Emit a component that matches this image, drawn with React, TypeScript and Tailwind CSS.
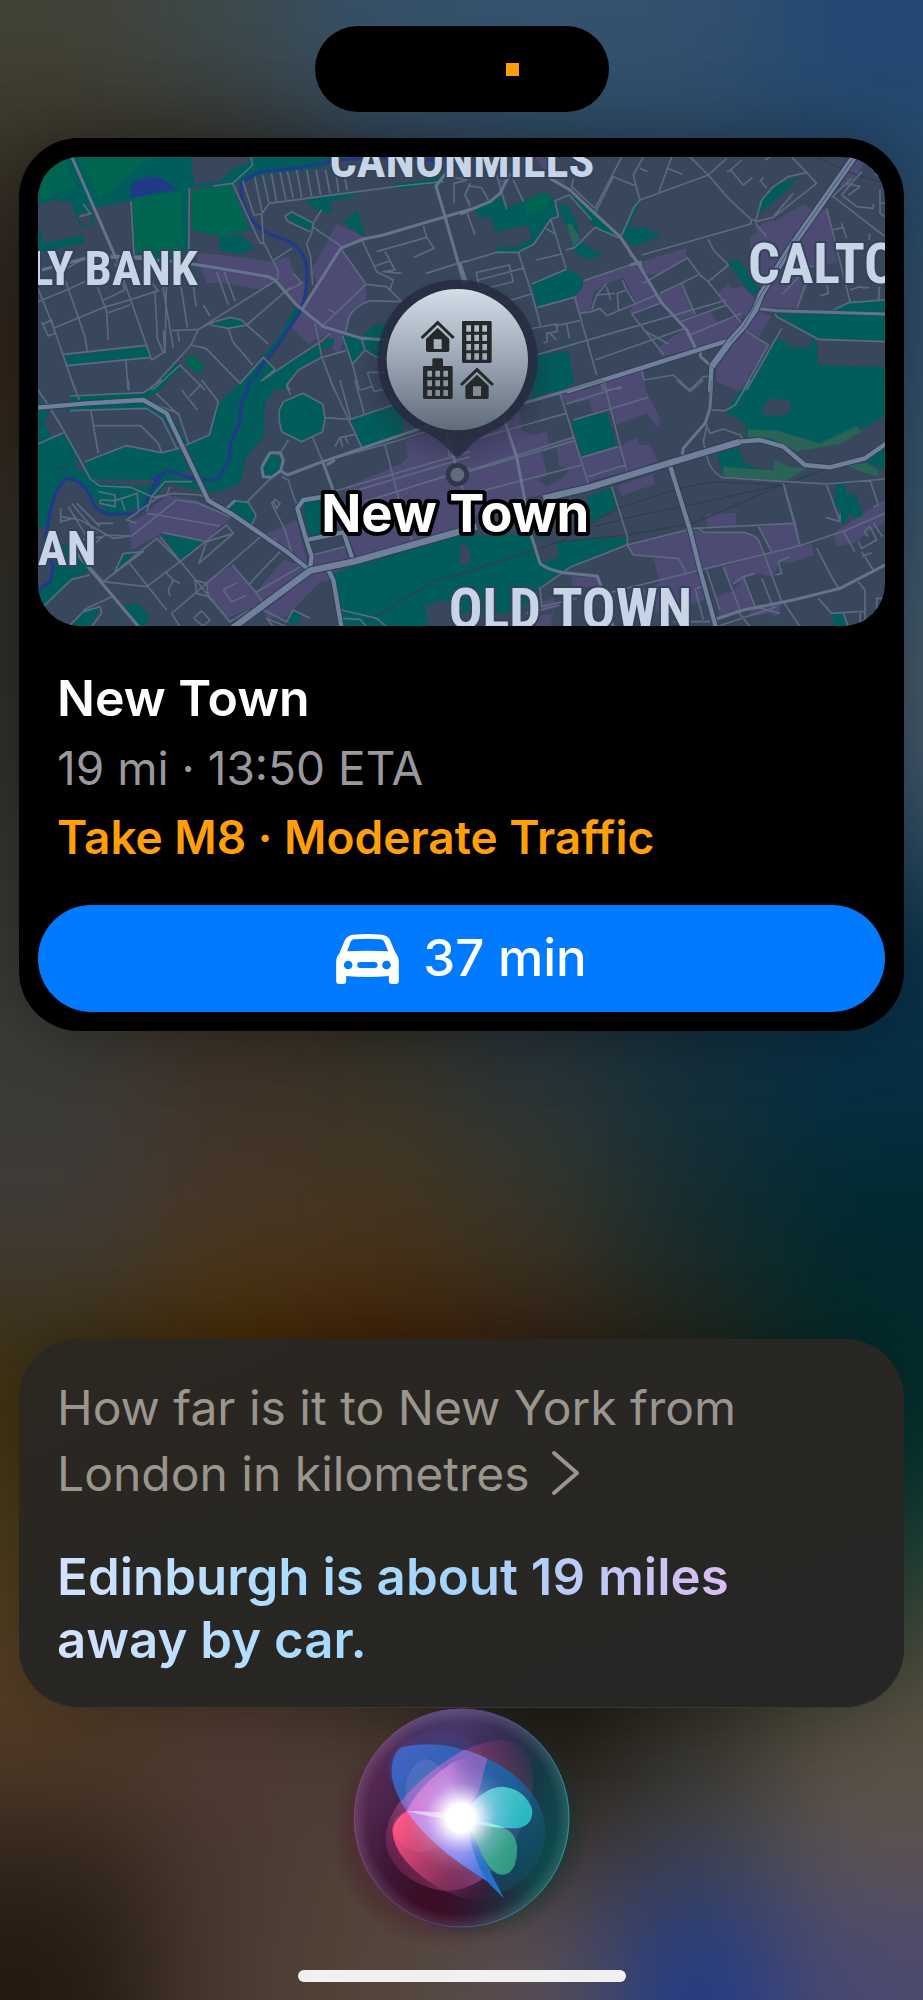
import React from 'react'

// The map is drawn from four tiles, each with its own local coordinates
interface MapTile {
  x: number
  y: number
  green: string
  bright: string
  olive: string
  purple: string
  slate: string
  water: string
  lake: string
  rail: string
  minor: string
  medium: string
  major: string
  trunk: string
}

const tiles: MapTile[] = [
  {
    x: -114,
    y: -111,
    green:
      'M110 105H575L575 150L588 193L570 205L565 385L520 430L405 400L393 243L290 262L265 250L288 312L242 322L210 240L180 250L172 237L114 255Z M114 318L125 345L128 370L245 345L255 368L170 388L114 400Z M588 192L655 185L680 165L700 145L745 130L750 105H1060L950 148L800 163L735 185L700 192L610 204Z M660 352L725 345L762 385L720 402L658 390Z M918 238L1062 218L1060 232L990 245L998 275L985 280L945 268Z M1028 308L1072 268L1098 352Z M875 275L938 304L932 332L865 300Z M1175 195L1290 178L1330 155L1320 190L1200 207Z M635 615L690 592L735 605L742 615L690 622Z M193 708L440 680L450 710L205 735Z M530 730L450 810H480L545 738Z M885 560L900 575L830 690L790 712L830 748L985 660L1000 655L1003 675L965 688L965 712L895 750L860 800V810H700L760 740L830 660Z M1028 648L1080 655L1092 690L1058 732Z M1092 640L1125 612L1165 615L1160 710L1130 712L1095 690Z',
    bright:
      'M400 232L545 215L550 385L405 400Z M575 212L695 195L750 335L720 335L670 352L575 330Z M553 728L575 703L615 738L595 762Z M114 180L148 150L165 225L114 242Z M140 146L195 118L228 200L172 220Z M230 111H450L300 238Z',
    olive: '',
    purple:
      'M580 395L820 425L865 408L890 480L925 485L905 560L855 510L822 480L790 510L680 490L620 490L600 440Z M1010 312L1070 340L1105 360L1022 385L1098 495L1098 550L1050 580L1020 700L1000 690L985 640L925 672L875 625L905 575L950 490L935 450Z',
    slate: 'M232 282L262 275L278 308L245 318Z',
    water:
      'M1330 127L1270 117L1190 113L1040 118L880 145L780 155L735 180Q720 190 722 210Q725 270 770 315Q800 345 860 360Q910 385 920 440Q925 520 900 575L830 680L780 745L740 815',
    lake: 'M392 192Q470 140 527 208L392 235Z',
    rail: '',
    minor:
      'M393 243L402 405M568 205L566 400M752 111L758 135L698 190L780 368L795 372M698 190L640 198M728 182L762 285L785 282L808 250L1200 198L1330 185M764 170L786 275M788 165L806 246M814 160L830 245M840 156L858 240M862 154L880 235M890 150L905 232M920 150L935 230M948 148L962 225M976 148L990 220M1005 145L1016 216M1030 155L1042 212M785 280L790 365L835 455L832 480M822 420L875 385M965 268L940 310L875 275L855 288L862 304L932 336M940 310L935 340L920 372L932 410L938 495M940 322L1025 380M1088 365L1130 455L1180 480L1170 508M1130 395L1280 352L1270 318M1280 352L1302 385L1242 412M1155 395L1185 450L1150 455L1205 460M1125 438L1170 422M1278 460L1400 422M1330 165L1400 180L1362 190V250M1022 385L1098 493L1160 500L1205 545M1098 493L970 615M985 567L1005 580M1203 545L1110 542Q1060 560 1048 590L1035 640M880 460L905 490L855 515M830 480L595 628L515 632M870 502L740 615L725 600L690 592L640 606L595 628L573 675L450 810M630 615L685 625L740 615L805 672M685 625L698 665L758 735M720 790L790 712L825 748L785 782L965 662L990 640M573 675L618 685L720 790M458 810L540 735L615 810M114 505L160 620L225 810M114 545L205 508L265 480M160 625L312 562L388 540L475 512L440 470M265 425L320 575L325 660M185 450L255 650L262 695M310 540L375 510M345 405L455 720L490 698L472 655L465 515M325 578L390 555M375 510L345 430M480 450L520 685M500 450L495 700M540 480L562 622M578 480L588 560M650 455L685 555M672 455L706 545M190 703L438 676M202 737L452 712M378 722L384 810M610 555L630 588M125 605L145 648L165 640L155 600L130 612M532 630L538 665M490 632L494 695M945 610L965 710L1003 810M965 712L895 750L860 795L870 810M967 712L1038 692M1028 648L1058 735L1078 810M1058 732L1095 690L1085 658M1095 690L1130 712H1160M1102 757H1160M1102 757L1120 810M1410 190L1395 225L1410 250M190 450L260 412L345 405M238 290L275 280M250 252L270 280',
    medium:
      'M213 105L345 408L520 425M114 453L190 432L260 414L430 410M560 430L640 442L805 470L825 480L890 555L970 620L1085 655L1165 660M905 570L1022 385L1090 357L1150 345L1410 268M1345 150L1308 198L1335 290L1392 490',
    major: '',
    trunk: '',
  },
  {
    x: 1266,
    y: -111,
    green:
      'M45 270L120 230L145 262L255 215L285 240L298 290L272 300L220 372L180 395L105 392L108 382L170 380L215 355L205 315L110 335L90 290L55 295Z M328 218L400 280L470 345L480 355L405 322L350 245Z M293 258L320 252L358 325L352 330L365 370L428 405L385 418L345 398L338 350L318 320Z M483 345L525 260L570 235L540 250L505 325L560 322L570 340L595 335L600 348L520 380Z M895 283L905 240L940 200L1020 168L965 225Z M213 490L320 448Q365 460 370 490Q365 525 325 535L232 563Z M805 430L835 418L898 510L880 528Z M235 705L325 693L342 790L300 815H180Z M1122 568L1165 548L1280 540V578L1130 572Z M945 580L1280 585V665L1075 655Z M950 655L980 665L985 680L1045 685L1058 655L1070 668L1075 735L1280 742V815H855Z',
    bright: 'M190 245L255 215L275 230L255 270L200 290Z',
    olive: 'M320 312L335 312L362 358L340 380Z',
    purple:
      'M225 111H255L320 165L310 190L270 175Z M80 111H140L150 160L125 195L110 165Z M342 540L370 480L510 435L678 385L680 410L590 465L545 460L592 525L665 490L705 585L650 600L605 548L515 582L510 570L530 550L490 475L440 490L400 520L390 570L360 580Z M592 685L670 628L665 600L755 575L768 605L800 600L845 590L820 660L720 680L605 710Z M772 520L805 490L818 508L845 498L885 535L870 580L835 600L790 550Z M880 565L935 590L895 650L860 630Z M770 722L860 630L925 675L840 810L768 785Z M885 320L940 298L948 315L920 350L890 335Z M870 350L1030 252L1075 280L1100 265L1132 430L1040 435L1045 495L1010 565L890 560L905 520L870 400Z M1190 111H1225L1165 205L1140 195Z M360 815L545 750L560 815Z',
    slate: '',
    water: '',
    lake: '',
    rail: 'M1075 111Q1140 155 1275 190',
    minor:
      'M30 260L15 225L28 198L65 203L85 240M20 275L45 345M110 165L140 268M160 180L190 245M0 430L110 397H175L222 372L272 298L295 290L285 242L328 225L395 300M175 397L215 520L242 618M48 458L148 435L160 485L60 510L48 458M55 480L188 445M272 298L318 445M228 420L305 402M258 325L285 342M318 390L345 382L405 322L480 355M340 175L335 200L405 265L485 111M405 280L460 170L528 198L520 165L550 111M528 198L540 240L745 165L690 111M540 240L522 262L483 350M597 215L635 111M622 145L668 163M540 145L562 155M745 165L800 115M745 165L805 235L875 300L872 312L545 405M745 358L760 390L805 435L745 485L800 555L845 610M680 410L720 465L745 485M550 490L680 415M600 520L715 465M665 490L705 582M875 300H888V312L920 350M888 300L905 240L940 200L985 170L1040 158L995 111M940 290L1000 220M1040 158L1070 190L940 292L888 305M900 180L920 205M910 172L900 185M800 155L812 150L850 195L878 172M812 150L845 120M915 120L930 111M1145 225L1205 155M1120 230L1275 350M1115 232L1175 175M1145 225L1190 260L1240 265V252M1165 225L1200 200L1160 190M1260 210V280L1275 290M1260 250H1275M1245 160L1262 170M1100 265L1170 545M1115 330L1150 322M1145 310L1160 355M1228 340V360M1050 435L968 522M1045 440L1100 435M1035 495L1012 565M1100 485L1105 520L1080 528M1170 510L1200 500L1210 503H1228M1258 500L1256 540M215 492L320 448M370 482L510 435M345 535L410 765M232 563L350 530M130 548L213 522M360 580L395 575L420 565L440 587L590 525M395 570L410 525L440 490M410 525L465 520M440 500L452 540M487 480L500 510L472 520L475 570M500 510L525 550M190 630L290 612L292 635L260 640L262 665L250 670M320 610L328 655M360 602L285 618M270 640L290 660M235 703L660 580L800 540M405 720L675 625M515 582L605 548M515 582L612 705M550 630L625 672M660 605L800 555M690 645L845 580M845 625L925 675L850 810M965 625L860 810M945 580L950 590L1075 658L1275 665M1120 570L1165 548L1275 540M420 780L430 810M545 750L552 780L640 765L690 810L730 770L755 768M430 810L485 805',
    medium:
      'M0 282L90 245L120 220L150 160M270 175L330 210L395 272L480 350L540 440L605 548L680 630L712 695M510 400L545 440M510 435L545 425M885 565L950 572L1275 582M720 690L722 710L755 740L800 690M0 430L20 490',
    major: 'M320 815L720 688L810 660M755 735L750 815',
    trunk: 'M1190 100L990 385L905 520L885 570L850 620L810 665L755 740',
  },
  {
    x: -114,
    y: 669,
    green:
      'M114 50L130 75L150 95L130 125L155 170L114 190Z M114 195L190 160L275 298L300 310L430 315L465 310L505 290L600 300L560 195L625 165L655 70L720 10L755 -10H870L830 20L795 70L790 170L740 230L720 310L660 335L615 335L505 310L430 385L330 403L270 345L240 305L200 300L160 350L145 440H114Z M250 245L380 197L485 215L535 205L570 270L500 300L275 298Z M170 490L210 500L270 570L215 600L160 660L125 685L114 640L160 590Z M838 90L850 62L908 40L965 70L975 115L965 155L905 185L845 155L838 125Z M1052 118L1160 85L1210 65V170L1088 202Z M780 260L810 220L850 240L845 270L815 292L785 290Z M680 385L705 362L745 368L768 405L755 435Z M905 370L960 358L1000 440L1030 455L930 470Z M485 462L620 485L540 540Z M370 520L410 510L340 580Z M980 585L1430 445V745H1030L1000 600Z M690 745L740 695L760 690L720 745Z M860 720L885 690L905 712L885 738Z M205 740L250 695L300 680L270 745Z M370 675L418 670L450 715L430 740L410 735Z M215 45L440 35L500 -10L480 30L440 55L500 85L560 190L540 200L490 115L440 88L200 92Z',
    bright: '',
    olive: '',
    purple:
      'M385 430L440 400L500 345L590 360L695 415L660 440L625 480L485 460L395 510Z M620 600L700 555L770 635L790 670L680 715L625 650Z M790 465L890 420L925 560L850 510Z M770 635L850 540L925 560L790 670Z M795 690L935 580L1060 565L1065 588L960 605L860 710L800 715Z M935 530L1035 500L1045 540L940 560Z M1040 320L1205 250L1225 230L1215 180L1330 145H1420V460L1070 530L1045 470Z',
    slate: 'M1358 500L1380 485L1425 500V545L1370 558Z M1275 680L1325 660L1420 690V745H1285Z M215 225L260 275L235 270Z M385 305L430 305L450 320L385 318Z',
    water:
      'M755 -5L725 70L718 130L692 190L688 240L655 295Q610 310 505 273L480 285L460 320L430 385Q415 405 330 403Q280 395 270 345Q240 295 200 295Q165 320 150 400L135 480L160 560L150 605L114 630',
    lake: 'M455 295L490 275L475 320Z',
    rail: 'M1100 725L1300 605L1420 568M160 275L205 255',
    minor:
      'M114 30L145 75L190 150L272 298L300 318L392 322L460 352L520 340L600 345L640 360M215 0L238 60M385 0L387 32M210 48L430 38L485 0M210 92L440 85L485 115L530 205M272 90L295 220M278 137H422L475 190L485 218M255 245L378 197L485 218L530 207L628 165L655 65L605 0M114 192L190 158M430 60L535 100L565 190M468 40L505 75L535 105M545 30L592 90M605 12L568 50M870 0L860 20L872 45M838 90L850 65L908 40L968 72L975 115L968 155L905 185L845 155L838 125L838 90M975 113L1052 118L1200 68M990 0L1085 202M1020 0L1052 118M1065 0L1092 100M1080 30L1115 20L1122 35L1150 28M865 180L842 218M938 172L968 245M815 292L742 365M1005 200L1020 172L1028 200M1020 172L1068 163M1035 172L1045 190M845 290L865 300L885 362M680 385L705 362L745 368L768 405L755 435M885 362L895 375M830 480L780 465M820 365L830 385L840 370L825 358L815 370L855 450L875 520M490 408L660 438M490 408L440 400M500 345L470 355L380 420L410 430M495 305H575M495 305L455 350L440 395M500 345L510 320M530 360L395 468L315 465L210 550M530 360L590 368L690 410M395 468L340 475L240 420L182 410M490 458L620 485L700 460L680 435L540 545L470 475L310 605M620 485L597 550L700 460M788 465L585 640L515 700L540 740M840 515L745 615M910 555L770 635M480 470L690 725M385 545L500 690M310 605L440 620L540 545M310 605L430 515L370 520L340 585M300 680L250 695L200 745M300 680L305 700L275 740M130 680L215 598L270 585M335 650L250 690M495 575L520 600L540 610M520 600L505 630L510 648M585 600L590 640L625 650L620 610L585 600M580 715L605 693L630 720L610 738L580 715M697 555L770 640L790 670M670 630L710 608M670 630L695 665L740 645M625 650L690 725L740 695L790 690L860 725L880 690L930 715M860 740L800 715L820 740M1025 690L1130 715L1165 745M1025 715L1080 718L1100 740M182 385V430M205 380L260 470M215 370L290 460M230 370L300 440M182 425L230 412M295 335L345 345V380L300 370V360L345 362M345 362L412 340L415 390M365 360L375 392M290 430H340M310 470L230 480M968 245L1200 180L1410 110M1155 195L1195 350L1235 480M965 345L1410 215M1040 340L1410 230M940 525L1035 500M1340 165L1350 240M1375 290L1390 330M1095 365L1410 265M205 490L310 605',
    medium:
      'M845 275L862 285L968 245L1410 95M968 245L1005 345M1005 240L980 255M785 262L810 218H840L850 240L842 272L815 292L790 290L785 262M230 520L420 745M680 385L705 362M1340 160L1385 320',
    major:
      'M114 83L260 70L430 60L500 100L625 362L700 405L860 515L930 572M1005 345L910 360L892 385L922 490L935 530L930 565M1030 455L1060 545M920 480L1040 455M985 570L1000 600L1025 745',
    trunk: 'M690 750L930 572L1060 545L1430 440',
  },
  {
    x: 1266,
    y: 669,
    green:
      'M205 60L225 25L340 -10V10Z M333 122L440 97L470 195L365 230Z M380 350L455 325L470 385L385 430Z M-20 470L215 460L300 485L500 470L500 490L330 560L240 620L190 680L190 700L-20 700Z M870 -10H1280V105L1200 150L1130 190L1020 210L930 180L860 165L855 130L795 95Z M772 220L835 200L850 245L900 270L880 300L785 275Z M1215 240L1280 205V270L1225 250Z M1130 312L1155 312L1162 345L1185 340L1210 408L1180 415L1175 395L1155 430L1140 425L1142 385L1120 380Z M1115 700H1150L1168 745H1125Z',
    bright: '',
    olive:
      'M862 148L950 152L1080 190L1190 138L1202 155L1140 192L1010 214L930 175L865 170Z M790 260L850 265L940 272L945 240L985 260L1040 265L980 300L930 302L790 288Z M1160 255L1220 250L1255 270V290L1190 270Z',
    purple:
      'M-20 190L130 110L180 95L185 150L215 165L260 155L270 200L340 170L385 310L300 340L210 350L-20 430Z M305 45L540 -10L570 55L605 125L590 140L560 100L470 135L440 80L400 100L385 60L320 75Z M365 235L470 200L495 275L385 305Z M470 205L530 172L540 195L570 195L595 245L505 275Z M470 318L578 282L585 312L485 348Z M770 -10H875L840 38Z M738 402L828 398V438H740Z M505 495L695 448L730 460H860L900 490L910 525L720 575L680 580L655 535L520 525Z M580 535L655 535L680 580H715L735 660L600 700L480 690L470 650L600 610Z M895 440L1003 430L1020 495L930 515Z M790 560L910 525L1055 492L1062 525L985 550L960 545L940 590L890 580L815 615Z M765 650L815 635L850 595L880 680L780 715Z M875 680L965 670L950 712L930 700L870 710Z M1120 460L1280 355V420L1180 490L1130 500Z M335 590L415 590L430 620H340Z M245 665L280 655L295 680L250 695Z M210 710L280 700L270 745H200Z',
    slate:
      'M908 85L930 55L985 60L995 80L975 108L908 105Z M245 215L290 205L298 260L325 265L320 285L260 320L235 300L262 285Z M215 470L285 480L298 530L245 548Z M0 490L25 500L35 540L20 555L0 550Z',
    water: '',
    lake: '',
    rail: 'M-20 588L300 485L470 385L660 325L760 305L965 315M300 485L500 465L700 430L840 370L965 315M400 440L560 400L690 375L965 315L1120 260',
    minor:
      'M430 0L500 275M300 40L385 310M318 72L485 20M340 120L565 52M0 190L318 100M0 280L340 172M25 275L345 182M0 350L365 255M365 232L475 200M385 290L495 255M455 320L502 470V495L520 525L655 535L680 580M502 495L700 445L1005 430L970 310M715 445L730 457H850Q890 465 900 490L965 665M895 440L935 515M245 622L330 562L500 495M240 620L245 680L350 655M200 700L300 675M440 640L720 570L1020 497L1160 450L1275 400M1005 430L1020 497M740 570L780 690M790 560L840 690M820 612L850 590L885 580M850 590L885 680L960 700M905 595L935 670M945 585L965 580L955 545L990 530M1070 505L1120 600L1140 630M1150 455L1185 515M770 740L950 680M830 690L870 740M970 665L1020 740M1075 655L1115 700L1195 695M1195 605L1215 630V720L1200 725V695H1215M1250 690V655H1270M1250 690L1275 680M755 90L795 92L825 75L870 0M735 125L750 160L790 147L840 165L850 180M740 140L730 185L742 235Q750 270 785 292L900 300L1100 312L1275 297M650 0L690 35L730 0M1100 315L1140 425L1098 412M1140 400L1140 425M1230 300L1255 375L1240 380M1195 485L1205 505L1250 480L1230 440L1212 455L1225 470M1205 515L1240 570M1205 530L1235 518M1240 430L1268 470M970 310L980 350L1020 495M705 625L730 720M710 625L725 620M640 725H750M1165 740L1150 700',
    medium:
      'M130 110L170 230L215 470L240 550Q260 568 310 578L412 588L425 625M755 0L750 85L735 130L670 205L665 240M760 720L850 690L1000 660L1140 625L1275 555M190 70L430 0M450 710L460 740',
    major: 'M628 250L690 450L720 570L770 750M840 185L900 180L970 200L1035 255L1110 262L1215 235L1280 190',
    trunk: 'M250 355L390 322L630 248L840 185',
  },
]

const mapLabels: { text: string; x: number; y: number; size: number; anchor: 'start' | 'middle' | 'end' }[] = [
  { text: 'CANONMILLS', x: 1272, y: 59, size: 144, anchor: 'middle' },
  { text: 'COMELY BANK', x: 479, y: 384, size: 146, anchor: 'end' },
  { text: 'CALTON', x: 2130, y: 377, size: 168, anchor: 'start' },
  { text: 'DEAN', x: 176, y: 1224, size: 146, anchor: 'end' },
  { text: 'OLD TOWN', x: 1597, y: 1412, size: 168, anchor: 'middle' },
]

// Wallpaper colours, one row per 100px, blurred together
const wallpaper: string[][] = [
  ['#424237', '#3c4a4d', '#34506a', '#35526e', '#33506f', '#234873'],
  ['#393428', '#35332e', '#30475a', '#2c4860', '#2c4a66', '#264a6c'],
  ['#2e261f', '#2e261f', '#2e261f', '#2c4860', '#2c4a66', '#2f4d69'],
  ['#2e2219', '#2e261f', '#2e261f', '#2c4860', '#2c4a66', '#304e69'],
  ['#33291e', '#2e261f', '#2e261f', '#2c4860', '#2c4a66', '#35526b'],
  ['#302d26', '#2e261f', '#2e261f', '#2c4860', '#2c4a66', '#3c566a'],
  ['#2d2d2a', '#2e261f', '#2e261f', '#2c4860', '#2c4a66', '#43596a'],
  ['#31302d', '#2e261f', '#2e261f', '#2c4860', '#2c4a66', '#46596b'],
  ['#353432', '#2e261f', '#2e261f', '#2c4860', '#2c4a66', '#2b4c62'],
  ['#393936', '#3a3026', '#2c2c24', '#22313c', '#122f40', '#0a3148'],
  ['#3a3a36', '#3c3024', '#33322a', '#26323a', '#14303d', '#08304a'],
  ['#3e3b38', '#43352b', '#403623', '#303631', '#142e36', '#022c38'],
  ['#413a34', '#4a3720', '#48331c', '#3a3324', '#172a2a', '#02282d'],
  ['#3c3014', '#462a00', '#3e1e02', '#342010', '#24261a', '#042b2b'],
  ['#463610', '#462a00', '#3e1e02', '#342010', '#24261a', '#06322f'],
  ['#4c3d1e', '#462a00', '#3e1e02', '#342010', '#24261a', '#1f4338'],
  ['#563f22', '#50382a', '#3e302a', '#1a1813', '#2a281e', '#4a4c3c'],
  ['#513a28', '#503c38', '#46382f', '#1a1710', '#36342b', '#595042'],
  ['#33271e', '#4a3830', '#52453a', '#40362e', '#40424e', '#5c5351'],
  ['#241a12', '#4b3a32', '#54463b', '#5a4e56', '#1f3b88', '#4b4970'],
]

const Wallpaper: React.FC = () => (
  <svg
    className="absolute inset-0 -z-10 h-full w-full"
    viewBox="0 0 923 2000"
    preserveAspectRatio="none"
    aria-hidden="true"
  >
    <defs>
      <filter
        id="soften"
        filterUnits="userSpaceOnUse"
        x="-200"
        y="-200"
        width="1323"
        height="2400"
        colorInterpolationFilters="sRGB"
      >
        <feGaussianBlur stdDeviation="58" />
      </filter>
    </defs>
    <g filter="url(#soften)">
      {wallpaper.map((row, r) =>
        row.map((fill, c) => {
          const left = c === 0 ? -200 : c * 154
          const right = c === 5 ? 1123 : (c + 1) * 154
          const top = r === 0 ? -200 : r * 100
          const bottom = r === 19 ? 2200 : (r + 1) * 100
          return (
            <rect key={`${r}-${c}`} x={left} y={top} width={right - left + 1} height={bottom - top + 1} fill={fill} />
          )
        }),
      )}
    </g>
  </svg>
)

const House: React.FC<{ x: number; y: number }> = ({ x, y }) => (
  <g transform={`translate(${x} ${y})`}>
    <path d="M2 51L50 5L98 51" fill="none" stroke="#25292c" strokeWidth="9" />
    <path
      fillRule="evenodd"
      d="M50 20L85 54V88Q85 93 80 93H20Q15 93 15 88V54Z M38 55V84H62V55Z"
    />
  </g>
)

const MapPin: React.FC = () => (
  <g transform="translate(966 339)">
    <ellipse cx="292" cy="300" rx="300" ry="290" fill="url(#pinShadow)" />
    <path
      d="M292 29A239 239 0 0 1 385 489Q335 515 310 550Q292 572 274 550Q250 515 200 489A239 239 0 0 1 292 29Z"
      fill="#252b3d"
      fillOpacity="0.8"
    />
    <circle cx="292" cy="269" r="212" fill="url(#pinFace)" />
    <circle cx="292" cy="614" r="28" fill="#606b7b" stroke="#31364f" strokeWidth="14" />
    <g fill="#25292c">
      <House x={183} y={153} />
      <House x={301} y={294} />
      <path
        fillRule="evenodd"
        d="M310 153H391Q395 153 395 157V274Q395 279 391 279H310Q306 279 306 274V157Q306 153 310 153Z M319 166V185H333V166Z M343 166V185H357V166Z M367 166V185H381V166Z M319 194V213H333V194Z M343 194V213H357V194Z M367 194V213H381V194Z M319 222V241H333V222Z M343 222V241H357V222Z M367 222V241H381V222Z M319 250V269H333V250Z M343 250V269H357V250Z M367 250V269H381V250Z"
      />
      <path
        fillRule="evenodd"
        d="M217 288V269Q217 265 221 265H245Q249 265 249 269V288H274Q278 288 278 292V382Q278 387 274 387H193Q189 387 189 382V292Q189 288 193 288Z M202 302V320H216V302Z M226 302V320H240V302Z M250 302V320H264V302Z M202 331V349H216V331Z M226 331V349H240V331Z M250 331V349H264V331Z M202 360V378H216V360Z M226 360V378H240V360Z M250 360V378H264V360Z"
      />
    </g>
  </g>
)

const MapView: React.FC = () => (
  <svg
    className="block h-auto w-full rounded-[42px] bg-[#39475c]"
    viewBox="0 0 2541 1407"
    role="img"
    aria-label="Map of New Town"
  >
    <defs>
      <linearGradient id="pinFace" x1="0" y1="0" x2="0" y2="1">
        <stop offset="0" stopColor="#d3dde8" />
        <stop offset="0.5" stopColor="#9ba7b4" />
        <stop offset="1" stopColor="#5f6b79" />
      </linearGradient>
      <radialGradient id="pinShadow">
        <stop offset="0.7" stopColor="#262a3c" stopOpacity="0.4" />
        <stop offset="1" stopColor="#262a3c" stopOpacity="0" />
      </radialGradient>
    </defs>
    {tiles.map(t => (
      <g key={`area-${t.x}-${t.y}`} transform={`translate(${t.x} ${t.y})`}>
        <path d={t.purple} fill="#4d4a73" />
        <path d={t.green} fill="#005d5b" />
        <path d={t.bright} fill="#006652" />
        <path d={t.olive} fill="#296456" />
        <path d={t.slate} fill="#39475c" />
        <path d={t.lake} fill="#203a88" />
        <path d={t.water} fill="none" stroke="#203a88" strokeWidth="10" />
        <path d={t.rail} fill="none" stroke="#2f3f4a" strokeWidth="4" />
      </g>
    ))}
    {tiles.map(t => (
      <g
        key={`road-${t.x}-${t.y}`}
        transform={`translate(${t.x} ${t.y})`}
        fill="none"
        strokeLinejoin="round"
      >
        <path d={t.minor} stroke="#5b6a7e" strokeWidth="5" />
        <path d={t.medium} stroke="#65738b" strokeWidth="9" />
        <path d={t.major} stroke="#2e3d55" strokeWidth="18" />
        <path d={t.major} stroke="#70809b" strokeWidth="13" />
        <path d={t.trunk} stroke="#2e3d55" strokeWidth="25" />
        <path d={t.trunk} stroke="#70809b" strokeWidth="19" />
      </g>
    ))}
    <path d="M2456 -11L2256 274L2171 409L2116 509L2076 554" fill="none" stroke="#44536a" strokeWidth="3" />
    <g
      fill="#c8d5e7"
      stroke="#34435a"
      strokeWidth="12"
      strokeLinejoin="round"
      paintOrder="stroke"
      className="font-['Roboto_Condensed','Liberation_Sans_Narrow','Liberation_Sans',sans-serif] font-bold"
    >
      {mapLabels.map(l => (
        <text key={l.text} x={l.x} y={l.y} fontSize={l.size} textAnchor={l.anchor}>
          {l.text}
        </text>
      ))}
    </g>
    <MapPin />
    <text
      x="1252"
      y="1124"
      fontSize="158"
      textAnchor="middle"
      fill="#fff"
      stroke="#000"
      strokeWidth="24"
      strokeLinejoin="round"
      paintOrder="stroke"
      className="font-bold"
    >
      New Town
    </text>
  </svg>
)

const CarIcon: React.FC = () => (
  <svg className="h-[50px] w-[63px]" viewBox="57 69 188 150" fill="#fff" aria-hidden="true">
    <path
      fillRule="evenodd"
      d="M66 128L82 90Q89 73 107 71Q151 67 195 71Q213 73 220 90L234 124Q245 138 245 154V210Q245 219 236 219H224Q215 219 215 210V195Q151 201 87 195V210Q87 219 78 219H66Q57 219 57 210V154Q57 138 66 128Z M90 121Q151 117 213 121L203 96Q199 86 190 85Q151 82 112 85Q102 86 99 96Z M93 149A13 13 0 1 0 93 175A13 13 0 1 0 93 149Z M208 149A13 13 0 1 0 208 175A13 13 0 1 0 208 149Z M129 153Q120 153 120 162Q120 171 129 171H172Q181 171 181 162Q181 153 172 153Z"
    />
  </svg>
)

const SiriOrb: React.FC = () => (
  <svg className="h-[220px] w-[218px] overflow-visible" viewBox="97 53 654 660" aria-hidden="true">
    <defs>
      <linearGradient id="orbBase" x1="0.1" y1="0.3" x2="0.95" y2="0.6">
        <stop offset="0" stopColor="#54264f" />
        <stop offset="0.5" stopColor="#25213f" />
        <stop offset="1" stopColor="#0d4a4c" />
      </linearGradient>
      <radialGradient id="orbLow" cx="0.35" cy="0.9" r="0.5">
        <stop offset="0" stopColor="#3d0b24" />
        <stop offset="1" stopColor="#3d0b24" stopOpacity="0" />
      </radialGradient>
      <radialGradient id="orbTop" cx="0.45" cy="0" r="0.5">
        <stop offset="0" stopColor="#4b3a70" />
        <stop offset="1" stopColor="#4b3a70" stopOpacity="0" />
      </radialGradient>
      <radialGradient id="glowLeft">
        <stop offset="0.8" stopColor="#4a1a2c" stopOpacity="0.4" />
        <stop offset="1" stopColor="#4a1a2c" stopOpacity="0" />
      </radialGradient>
      <radialGradient id="glowRight">
        <stop offset="0.8" stopColor="#12302e" stopOpacity="0.45" />
        <stop offset="1" stopColor="#12302e" stopOpacity="0" />
      </radialGradient>
      <linearGradient id="orbRim" x1="0.1" y1="0.3" x2="1" y2="0.5">
        <stop offset="0" stopColor="#8a3f7c" />
        <stop offset="0.45" stopColor="#55408c" />
        <stop offset="1" stopColor="#1f9a9c" />
      </linearGradient>
      <radialGradient id="orbEdge">
        <stop offset="0.88" stopColor="#fff" stopOpacity="0" />
        <stop offset="1" stopColor="#fff" stopOpacity="0.12" />
      </radialGradient>
      <linearGradient id="petalBlue" x1="0" y1="0" x2="1" y2="0.9">
        <stop offset="0" stopColor="#4667cf" />
        <stop offset="0.55" stopColor="#1a64a4" />
        <stop offset="1" stopColor="#0e4a58" stopOpacity="0.4" />
      </linearGradient>
      <linearGradient id="petalPink" gradientUnits="userSpaceOnUse" x1="225" y1="400" x2="500" y2="600">
        <stop offset="0" stopColor="#ff4f84" />
        <stop offset="0.5" stopColor="#a83a66" stopOpacity="0.85" />
        <stop offset="1" stopColor="#4d2450" stopOpacity="0.15" />
      </linearGradient>
      <linearGradient id="petalRose" gradientUnits="userSpaceOnUse" x1="220" y1="500" x2="630" y2="220">
        <stop offset="0" stopColor="#b0346c" stopOpacity="0.35" />
        <stop offset="0.45" stopColor="#d070cc" stopOpacity="0.65" />
        <stop offset="0.75" stopColor="#a8406f" stopOpacity="0.5" />
        <stop offset="1" stopColor="#a8406f" stopOpacity="0.1" />
      </linearGradient>
      <linearGradient id="petalMagenta" gradientUnits="userSpaceOnUse" x1="280" y1="320" x2="475" y2="290">
        <stop offset="0" stopColor="#ea78dc" stopOpacity="0.8" />
        <stop offset="0.6" stopColor="#e58ae4" stopOpacity="0.6" />
        <stop offset="1" stopColor="#9a6ad0" stopOpacity="0" />
      </linearGradient>
      <linearGradient id="petalIndigo" gradientUnits="userSpaceOnUse" x1="300" y1="370" x2="540" y2="610">
        <stop offset="0" stopColor="#c58af0" />
        <stop offset="0.5" stopColor="#7f84ee" />
        <stop offset="1" stopColor="#1f6cc4" />
      </linearGradient>
      <linearGradient id="petalCyan" x1="0" y1="0" x2="1" y2="0.4">
        <stop offset="0" stopColor="#6bd6d8" />
        <stop offset="1" stopColor="#2cb8c2" />
      </linearGradient>
      <linearGradient id="petalGreen" x1="0" y1="0" x2="1" y2="0.6">
        <stop offset="0" stopColor="#4fb9a8" />
        <stop offset="1" stopColor="#329a82" />
      </linearGradient>
      <radialGradient id="flare">
        <stop offset="0" stopColor="#fff" />
        <stop offset="0.26" stopColor="#fff" />
        <stop offset="0.42" stopColor="#f3eaff" stopOpacity="0.7" />
        <stop offset="0.65" stopColor="#d2c4fa" stopOpacity="0.25" />
        <stop offset="1" stopColor="#a8a0e8" stopOpacity="0" />
      </radialGradient>
    </defs>
    <ellipse cx="365" cy="430" rx="340" ry="345" fill="url(#glowLeft)" />
    <ellipse cx="480" cy="405" rx="330" ry="345" fill="url(#glowRight)" />
    <ellipse cx="423" cy="383" rx="323" ry="328" fill="url(#orbBase)" />
    <ellipse cx="423" cy="383" rx="323" ry="328" fill="url(#orbLow)" />
    <ellipse cx="423" cy="383" rx="323" ry="328" fill="url(#orbTop)" />
    <ellipse cx="423" cy="383" rx="323" ry="328" fill="url(#orbEdge)" />
    <ellipse cx="423" cy="383" rx="322" ry="327" fill="none" stroke="url(#orbRim)" strokeWidth="3" />
    <path
      d="M210 270Q185 200 260 150Q350 100 440 145Q520 180 470 300L423 383Q270 360 210 270Z"
      fill="#3f55a8"
      fillOpacity="0.2"
    />
    <path
      d="M200 410Q215 335 330 245Q430 165 520 151Q580 145 610 180Q645 230 635 300Q600 480 480 570Q400 620 320 590Q230 560 200 480Q190 440 200 410Z"
      fill="url(#petalRose)"
    />
    <path
      d="M245 170Q330 150 430 178Q560 215 635 310Q690 390 668 470Q640 570 548 605L500 575Q320 460 250 350Q205 275 214 225Q220 180 245 170Z"
      fill="url(#petalBlue)"
      fillOpacity="0.92"
    />
    <path d="M240 335Q310 245 430 178Q470 188 500 205L475 300L423 383L258 362Z" fill="#c46ac8" fillOpacity="0.55" />
    <path
      d="M258 362L423 383L440 430L500 560L520 625Q440 640 350 590Q220 510 215 420Q222 385 258 362Z"
      fill="url(#petalPink)"
    />
    <path d="M258 362Q300 280 390 220Q430 198 475 205L478 300L423 383Z" fill="url(#petalMagenta)" />
    <path d="M258 362Q330 365 423 383L450 430L548 622L500 573Q330 470 258 362Z" fill="url(#petalIndigo)" />
    <path d="M258 350Q240 235 310 207Q370 205 423 350Z" fill="#c5a8e0" fillOpacity="0.16" />
    <path d="M215 410Q215 375 260 365L423 383Q370 480 300 487Q230 475 215 410Z" fill="#ff8a9e" fillOpacity="0.14" />
    <path d="M445 425L550 624L510 585Q460 520 445 425Z" fill="#2272cc" />
    <path d="M423 383Q480 290 545 289Q610 295 634 355Q640 405 590 414Q500 415 423 383Z" fill="url(#petalCyan)" />
    <path d="M430 390Q540 395 575 430Q600 465 582 525Q565 560 535 552Q500 540 470 460Z" fill="url(#petalGreen)" />
    <path d="M430 388Q500 390 553 413Q500 412 430 392Z" fill="#6affe0" />
    <circle cx="420" cy="383" r="165" fill="url(#flare)" />
    <path d="M258 362Q350 362 420 375L410 390Q330 382 258 362Z" fill="#fff" fillOpacity="0.5" />
  </svg>
)

const App: React.FC = () => {
  return (
    <div className="relative isolate flex min-h-screen flex-col overflow-hidden bg-[#2c2a28] px-[19px] pt-[26px] pb-[18px] font-['Inter','Liberation_Sans',sans-serif]">
      <Wallpaper />

      <div className="flex h-[86px] w-[294px] items-center justify-end self-center rounded-full bg-black pr-[90px]">
        <span className="h-[13px] w-[13px] bg-[#ff9f0a]" />
      </div>

      <main className="mt-[26px] flex flex-1 flex-col">
        <section className="rounded-[60px] bg-black p-[19px] shadow-[0_0_70px_rgba(0,0,0,0.35)]">
          <MapView />
          <div className="px-[19px] pt-[36px] pb-[33px]">
            <h1 className="text-[50px] leading-[72px] font-semibold text-white">New Town</h1>
            <p className="text-[46px] leading-[69px] text-[#98989d]">19 mi · 13:50 ETA</p>
            <p className="text-[46px] leading-[69px] font-semibold text-[#ff9f0a]">Take M8 · Moderate Traffic</p>
          </div>
          <button
            type="button"
            className="flex h-[107px] w-full items-center justify-center gap-[24px] rounded-full bg-[#007aff] text-[51px] font-medium text-white"
          >
            <CarIcon />
            37 min
          </button>
        </section>

        <section className="mt-auto rounded-[60px] border-b border-[#3a3733] bg-[#282623] bg-linear-to-br from-[#2b2721] to-[#252625] px-[38px] pt-[36px] pb-[36px] shadow-[0_0_70px_rgba(0,0,0,0.3)]">
          <button type="button" className="block w-full pr-[76px] text-left text-[48px] leading-[66px] text-[#9a958d]">
            How far is it to New York from London in kilometres{' '}
            <svg
              className="ml-2 inline h-[46px] w-[29px] align-[-5px]"
              viewBox="0 0 29 46"
              fill="none"
              stroke="currentColor"
              strokeWidth="4"
              strokeLinecap="round"
              strokeLinejoin="round"
              aria-hidden="true"
            >
              <path d="M3 3L26 23L3 43" />
            </svg>
          </button>
          <p className="mt-[38px] mr-[130px] bg-[linear-gradient(80deg,#d6e2ff_0%,#aadcff_35%,#a4d4fb_60%,#dcbcf2_100%)] bg-clip-text text-[51px] leading-[63px] font-semibold text-transparent">
            Edinburgh is about 19 miles away by car.
          </p>
        </section>
      </main>

      <footer className="flex flex-col items-center">
        <SiriOrb />
        <div className="mt-[42px] h-[12px] w-[328px] rounded-full bg-[#f0f0f0]" />
      </footer>
    </div>
  )
}

export default App
